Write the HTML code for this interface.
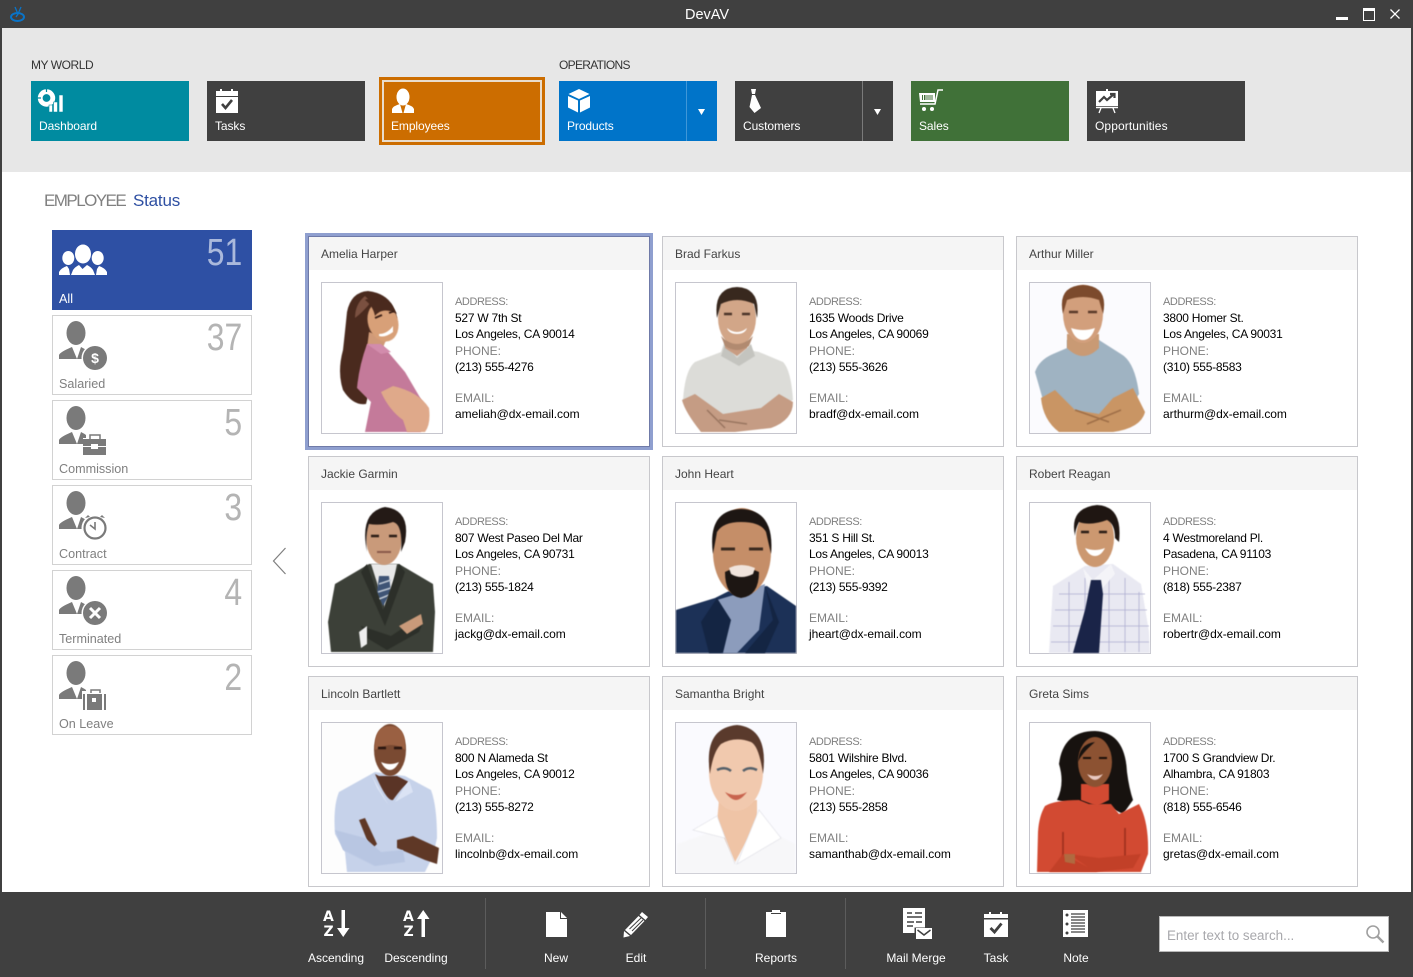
<!DOCTYPE html>
<html><head><meta charset="utf-8"><title>DevAV</title>
<style>
html,body{margin:0;padding:0;background:#fff}
#r{position:relative;width:1413px;height:977px;overflow:hidden;background:#fff;font-family:"Liberation Sans",sans-serif;font-size:12px}
#r div,#r svg,#r span.a{position:absolute;display:block}
.t{top:81px;width:158px;height:60px;color:#fff}
.t b{position:absolute;left:8px;top:37px;font-weight:400;font-size:12px;line-height:16px;white-space:nowrap;letter-spacing:-.08px}
.s{left:52px;width:198px;height:78px;border:1px solid #d2d2d2;background:#fff}
.s i{position:absolute;right:9px;top:0;font-style:normal;font-size:38px;line-height:44px;color:#b4b4b4;transform:scaleX(.84);transform-origin:100% 50%}
.s b{position:absolute;left:6px;top:60px;font-weight:400;font-size:12.6px;line-height:16px;color:#808080}
.c{width:340px;height:209px;border:1px solid #c8c8cc;background:#fff;color:#000}
.c h4{position:absolute;left:0;top:0;width:328px;height:33px;margin:0;padding-left:12px;background:#f5f5f5;font-weight:400;font-size:12px;line-height:35px;color:#444}
.c svg{left:12px;top:45px}
.c svg>*:not(:first-child){filter:blur(.6px)}
.c p{position:absolute;left:146px;margin:0;font-size:12px;line-height:16px;white-space:nowrap}
.c .l{color:#808080}
.c .ad{font-size:11px;letter-spacing:-.42px}
.c .v{letter-spacing:-.25px}
.c .p7{letter-spacing:-.05px}
.c .p1{top:57px}.c .p2{top:73px}.c .p3{top:89px}.c .p4{top:106px}.c .p5{top:122px}.c .p6{top:153px}.c .p7{top:169px}
.f{top:950px;width:100px;text-align:center;color:#fff;font-size:12px;line-height:16px}
</style></head><body><div id="r">

<!-- frame -->
<div style="left:0;top:0;width:1413px;height:28px;background:#404040"></div>
<div style="left:0;top:28px;width:2px;height:870px;background:#404040"></div>
<div style="left:1411px;top:28px;width:2px;height:870px;background:#404040"></div>
<div style="left:2px;top:28px;width:1409px;height:144px;background:#e7e7e7"></div>
<div style="left:0;top:892px;width:1413px;height:85px;background:#404040"></div>

<!-- title bar -->
<svg style="left:8px;top:4px" width="20" height="20" viewBox="0 0 20 20"><ellipse cx="9.500" cy="13" rx="6.500" ry="4" fill="none" stroke="#0a74c8" stroke-width="2"/><path d="M7 3L10 10L13 3M10 10L8 13" fill="none" stroke="#0a74c8" stroke-width="1.300"/></svg>
<div style="left:607px;top:6px;width:200px;text-align:center;color:#fff;font-size:14.500px;line-height:18px">DevAV</div>
<div style="left:1336px;top:17px;width:12px;height:3px;background:#fff"></div>
<div style="left:1363px;top:8px;width:10px;height:9px;border:1px solid #fff;border-top-width:3px"></div>
<svg style="left:1389px;top:8px" width="12" height="12" viewBox="0 0 12 12"><path d="M1.500 1.500L10.500 10.500M10.500 1.500L1.500 10.500" stroke="#fff" stroke-width="1.300"/></svg>

<!-- nav -->
<div style="left:31px;top:57px;color:#333;line-height:16px;letter-spacing:-.45px">MY WORLD</div>
<div style="left:559px;top:57px;color:#333;line-height:16px;letter-spacing:-.7px">OPERATIONS</div>

<div class="t" style="left:31px;background:#008ba0"><b>Dashboard</b>
<svg style="left:6px;top:7px" width="28" height="26" viewBox="0 0 28 26"><circle cx="9.500" cy="10" r="6.300" fill="none" stroke="#fff" stroke-width="4.800"/><path d="M9.500 0V4M0 10H4" stroke="#008ba0" stroke-width="1.200"/><path d="M12 17h3.500v7H12zM16.500 14H20.500V24H16.500zM22 7h4v17h-4z" fill="#fff" stroke="#008ba0" stroke-width=".6"/></svg></div>

<div class="t" style="left:207px;background:#404040"><b>Tasks</b>
<svg style="left:8px;top:7px" width="24" height="26" viewBox="0 0 24 26"><path d="M1 3H5V1H7V3H16V1H18V3H23V8H1ZM1 9H23V25H1Z" fill="#fff"/><path d="M7 16L10.500 20L17 12" fill="none" stroke="#404040" stroke-width="2.600"/></svg></div>

<div style="left:379px;top:77px;width:160px;height:62px;border:3px solid #cc6d00;outline:2px solid #e9dccb;outline-offset:-5px;background:#cc6d00"></div>
<div class="t" style="left:383px;background:transparent"><b>Employees</b>
<svg style="left:8px;top:7px" width="24" height="26" viewBox="0 0 24 26"><ellipse cx="12" cy="9" rx="6.500" ry="8.500" fill="#fff"/><path d="M1 25V21Q2 18 9 16L11.500 25ZM12.500 25L15 16Q22 18 23 21V25Z" fill="#fff"/></svg></div>

<div class="t" style="left:559px;background:#0074c9"><b>Products</b>
<div style="left:127px;top:0;width:1px;height:60px;background:#3f97d8"></div>
<svg style="left:139px;top:28px" width="8" height="6" viewBox="0 0 8 6"><path d="M0 0H7L3.500 6Z" fill="#fff"/></svg>
<svg style="left:8px;top:8px" width="24" height="24" viewBox="0 0 24 24"><path d="M12 0L22.500 5L12 10L1.500 5Z M1 7L11 11.500V23.500L1 18.500Z M13 11.500L23 7V18.500L13 23.500Z" fill="#fff"/></svg></div>

<div class="t" style="left:735px;background:#404040"><b>Customers</b>
<div style="left:127px;top:0;width:1px;height:60px;background:#7a7a7a"></div>
<svg style="left:139px;top:28px" width="8" height="6" viewBox="0 0 8 6"><path d="M0 0H7L3.500 6Z" fill="#fff"/></svg>
<svg style="left:12px;top:7px" width="16" height="26" viewBox="0 0 16 26"><path d="M4 1H9L8 6H5Z M5 7H8L14 20L7.500 25L2.500 19Z" fill="#fff"/></svg></div>

<div class="t" style="left:911px;background:#407138"><b>Sales</b>
<svg style="left:7px;top:7px" width="26" height="26" viewBox="0 0 26 26"><path d="M1 5H17V14H2Z" fill="#fff"/><path d="M4.500 7V12M6.500 7V12M8 7V12M10 7V12M12 7V12M14 7V12" stroke="#407138"/><path d="M2 16H17L20 2H25" fill="none" stroke="#fff" stroke-width="1.500"/><circle cx="6" cy="21" r="2" fill="#fff"/><circle cx="14" cy="21" r="2" fill="#fff"/></svg></div>

<div class="t" style="left:1087px;background:#404040"><b style="letter-spacing:.1px">Opportunities</b>
<svg style="left:8px;top:7px" width="24" height="26" viewBox="0 0 24 26"><path d="M11 1H13V3H11Z" fill="#fff"/><path d="M1 3H23V18H1Z" fill="#fff"/><path d="M4 14L9 9L12 12L19 6M15 6H19.500V10" fill="none" stroke="#404040" stroke-width="2.200"/><path d="M1 19.500H23" stroke="#fff" stroke-width="1.500"/><path d="M6 20L4 25M18 20L20 25" stroke="#fff" stroke-width="1.300"/></svg></div>

<!-- heading -->
<div style="left:44px;top:191px;font-size:17px;line-height:20px;color:#808080;letter-spacing:-1.55px;white-space:nowrap">EMPLOYEE</div>
<div style="left:133px;top:191px;font-size:17px;line-height:20px;color:#2e4fa2;letter-spacing:-.2px">Status</div>

<!-- filters -->
<div class="s" style="top:230px;height:80px;width:200px;border:0;background:#2e50a4"><i style="color:#aab9dc;top:1px;right:10px">51</i><b style="color:#fff;left:7px;top:61px">All</b>
<svg style="left:7px;top:14px" width="50" height="34" viewBox="0 0 50 34"><g fill="#fff"><ellipse cx="9.300" cy="14" rx="6" ry="7"/><ellipse cx="24" cy="10" rx="8" ry="9.500"/><ellipse cx="38.700" cy="14" rx="6" ry="7"/><path d="M0 31V28Q2 24 8 22L10 25L11 31ZM12 31L14 26Q16 23 20 21L23.500 25L28 21Q32 23 34 26L36 31ZM37 31L38 25L40 22Q46 24 48 28V31Z"/></g></svg></div>

<div class="s" style="top:315px"><i>37</i><b>Salaried</b>
<svg style="left:5px;top:5px" width="52" height="52" viewBox="0 0 52 52"><g fill="#7a7a7a"><ellipse cx="18" cy="12" rx="9.500" ry="12"/><path d="M1 38V34Q2 31 14 26L19 38ZM19 38L23 26Q27 28 28 29V38Z"/></g><g transform="translate(0,-1)"><circle cx="37" cy="38" r="13.500" fill="#fff"/><circle cx="37" cy="38" r="12" fill="#7a7a7a"/><text x="37" y="43" text-anchor="middle" font-family="Liberation Sans" font-weight="700" font-size="14" fill="#fff">$</text></g></svg></div>

<div class="s" style="top:400px"><i>5</i><b>Commission</b>
<svg style="left:5px;top:5px" width="52" height="52" viewBox="0 0 52 52"><g fill="#7a7a7a"><ellipse cx="18" cy="12" rx="9.500" ry="12"/><path d="M1 38V34Q2 31 14 26L19 38ZM19 38L23 26Q27 28 28 29V38Z"/></g><g transform="translate(0,-1)"><path d="M25 33H48V49H25Z" fill="#fff"/><path d="M32 34V30H42V34" fill="none" stroke="#7a7a7a" stroke-width="1.500"/><path d="M25 34H48V41H40V39H33V41H25ZM25 42H33V44H40V42H48V50H25Z" fill="#7a7a7a"/></g></svg></div>

<div class="s" style="top:485px"><i>3</i><b>Contract</b>
<svg style="left:5px;top:5px" width="52" height="52" viewBox="0 0 52 52"><g fill="#7a7a7a"><ellipse cx="18" cy="12" rx="9.500" ry="12"/><path d="M1 38V34Q2 31 14 26L19 38ZM19 38L23 26Q27 28 28 29V38Z"/></g><g transform="translate(0,-1)"><circle cx="37" cy="38" r="13.500" fill="#fff"/><circle cx="37" cy="38" r="10.500" fill="#fff" stroke="#7a7a7a" stroke-width="2.200"/><path d="M37 32V39L32 35" fill="none" stroke="#7a7a7a" stroke-width="1.600"/><path d="M27 28L30 25L32 27ZM47 28L44 25L42 27Z" fill="#7a7a7a"/></g></svg></div>

<div class="s" style="top:570px"><i>4</i><b>Terminated</b>
<svg style="left:5px;top:5px" width="52" height="52" viewBox="0 0 52 52"><g fill="#7a7a7a"><ellipse cx="18" cy="12" rx="9.500" ry="12"/><path d="M1 38V34Q2 31 14 26L19 38ZM19 38L23 26Q27 28 28 29V38Z"/></g><g transform="translate(0,-1)"><circle cx="37" cy="38" r="13.500" fill="#fff"/><circle cx="37" cy="38" r="12" fill="#7a7a7a"/><path d="M32 33L42 43M42 33L32 43" stroke="#fff" stroke-width="3"/></g></svg></div>

<div class="s" style="top:655px"><i>2</i><b>On Leave</b>
<svg style="left:5px;top:5px" width="52" height="52" viewBox="0 0 52 52"><g fill="#7a7a7a"><ellipse cx="18" cy="12" rx="9.500" ry="12"/><path d="M1 38V34Q2 31 14 26L19 38ZM19 38L23 26Q27 28 28 29V38Z"/></g><g transform="translate(0,-1)"><path d="M24 31H49V52H24Z" fill="#fff"/><path d="M33 33V30H42V33" fill="none" stroke="#7a7a7a" stroke-width="1.500"/><path d="M25 34H27V50H25ZM29 34H44V50H29ZM46 34H48V50H46Z" fill="#7a7a7a"/><rect x="34" y="38" width="4" height="4" fill="#fff"/></g></svg></div>

<svg style="left:272px;top:547px" width="15" height="28" viewBox="0 0 15 28"><path d="M13.500 1L1.500 14L13.500 27" fill="none" stroke="#7f7f7f" stroke-width="1.200"/></svg>

<!-- selected outline -->
<div style="left:305px;top:233px;width:342px;height:211px;border:3px solid #8f9fcf"></div>

<!-- CARDS -->
<div class="c" style="left:308px;top:236px;border-color:#6f7aa8"><h4>Amelia Harper</h4>
<svg width="122" height="152" viewBox="0 0 122 152"><rect x=".5" y=".5" width="121" height="151" fill="#fff" stroke="#c6c6ce"/>
<path d="M47 9Q30 10 26 30Q24 50 22 68Q16 90 22 108Q32 124 45 122L60 60L76 36Q72 12 47 9Z" fill="#4a2a1e"/>
<path d="M44 14Q34 22 34 36Q42 30 50 20Z" fill="#7a5040"/>
<path d="M48 50L66 56L60 70L46 66Z" fill="#d09a78"/>
<ellipse cx="62" cy="40" rx="15" ry="20" transform="rotate(-18 62 40)" fill="#d8a078"/>
<path d="M44 18Q50 14 70 22L76 32Q62 24 54 34Q52 24 44 18Z" fill="#4a2a1e"/>
<path d="M54 36L61 33M68 31L73 29" stroke="#3a2018" stroke-width="2"/>
<path d="M58 52Q66 52 72 44L72 50Q64 56 58 54Z" fill="#fff"/>
<path d="M46 62L62 64L84 90L104 124L100 150H44L50 120L36 106Q38 84 46 62Z" fill="#c47a9a"/>
<path d="M46 62L60 72L70 70L60 62Z" fill="#d28cac"/>
<path d="M60 110L72 104Q98 110 108 126Q110 142 104 150H86L82 138Q68 128 60 110Z" fill="#dfa98a"/></svg>
<p class="l ad p1">ADDRESS:</p><p class="v p2">527 W 7th St</p><p class="v p3">Los Angeles, CA 90014</p><p class="l p4">PHONE:</p><p class="v p5">(213) 555-4276</p><p class="l p6">EMAIL:</p><p class="p7">ameliah@dx-email.com</p></div>

<div class="c" style="left:662px;top:236px"><h4>Brad Farkus</h4>
<svg width="122" height="152" viewBox="0 0 122 152"><rect x=".5" y=".5" width="121" height="151" fill="#fff" stroke="#c6c6ce"/>
<path d="M52 52H72V68L84 70L108 80Q116 88 118 118Q100 128 76 136H40Q20 126 8 118Q10 88 20 80L46 70Z" fill="#dcdcd8"/>
<path d="M50 62L62 76L76 62L80 74L64 84L46 74Z" fill="#c4c4bf"/>
<path d="M52 54H72V66L62 74L50 66Z" fill="#c89c82"/>
<ellipse cx="62" cy="36" rx="19" ry="28" fill="#d2a688"/>
<path d="M42 36Q38 6 62 5Q86 6 82 36L79 22Q62 14 46 22Z" fill="#38281e"/>
<path d="M49 32H57M67 32H75" stroke="#4a3428" stroke-width="2.400"/>
<path d="M52 46Q62 54 72 46Q70 52 62 52Q54 52 52 46Z" fill="#fff"/>
<path d="M46 54Q62 70 78 54L74 64Q62 72 50 64Z" fill="#b18a70"/>
<path d="M7 118L20 112L48 132L86 126L104 112L118 120Q118 138 96 146L60 150H26Q10 130 7 118Z" fill="#c59c84"/>
<path d="M44 138L72 142M32 128L50 146" stroke="#9a7660" stroke-width="1.500"/></svg>
<p class="l ad p1">ADDRESS:</p><p class="v p2">1635 Woods Drive</p><p class="v p3">Los Angeles, CA 90069</p><p class="l p4">PHONE:</p><p class="v p5">(213) 555-3626</p><p class="l p6">EMAIL:</p><p class="p7">bradf@dx-email.com</p></div>

<div class="c" style="left:1016px;top:236px"><h4>Arthur Miller</h4>
<svg width="122" height="152" viewBox="0 0 122 152"><rect x=".5" y=".5" width="121" height="151" fill="#fbfbfe" stroke="#c6c6ce"/>
<path d="M38 58L70 58L92 72Q106 80 110 112L102 124L84 140H28L14 118L6 90Q10 78 24 72L38 66Z" fill="#9fb3c2"/>
<path d="M38 52H70V66Q54 82 38 66Z" fill="#c99a74"/>
<ellipse cx="54" cy="32" rx="20" ry="29" fill="#d29f7c"/>
<path d="M34 32Q28 4 54 3Q80 4 74 32L70 18Q54 12 38 18Z" fill="#7c4a2c"/>
<path d="M40 30H49M59 30H68" stroke="#5a3a2a" stroke-width="2.400"/>
<path d="M42 46Q54 50 66 46Q62 58 54 58Q46 58 42 46Z" fill="#fff"/>
<path d="M12 116L26 108L46 128L70 132L84 116L104 106L116 130Q112 146 84 150H30Q14 138 12 116Z" fill="#c99564"/>
<path d="M46 128L80 140M58 142L92 128" stroke="#9f6f48" stroke-width="1.500"/></svg>
<p class="l ad p1">ADDRESS:</p><p class="v p2">3800 Homer St.</p><p class="v p3">Los Angeles, CA 90031</p><p class="l p4">PHONE:</p><p class="v p5">(310) 555-8583</p><p class="l p6">EMAIL:</p><p class="p7">arthurm@dx-email.com</p></div>

<div class="c" style="left:308px;top:456px"><h4>Jackie Garmin</h4>
<svg width="122" height="152" viewBox="0 0 122 152"><rect x=".5" y=".5" width="121" height="151" fill="#fff" stroke="#c6c6ce"/>
<path d="M48 62L78 62L112 82L114 110L112 150H10L7 120L14 82Z" fill="#3c4038"/>
<path d="M50 62H76L66 112Z" fill="#e8e8e8"/>
<path d="M58 74H68L70 90L62 104L56 90Z" fill="#3f5475"/>
<path d="M58 82L70 78M57 90L70 86M58 97L68 93" stroke="#c4ccd6" stroke-width="1.500"/>
<path d="M46 62L62 108L78 62L84 70L64 124L40 70Z" fill="#2c2f29"/>
<ellipse cx="63" cy="36" rx="18" ry="27" fill="#c99a7a"/>
<path d="M46 50Q38 10 64 5Q90 8 84 40L80 50Q82 22 72 20Q60 24 48 22Q44 34 46 50Z" fill="#241a16"/>
<path d="M50 34H58M68 34H76" stroke="#2a1c16" stroke-width="2.400"/>
<path d="M56 50H70" stroke="#8a5a4a" stroke-width="2"/>
<path d="M40 124L70 134L94 118L102 120L98 130L66 148L46 136Z" fill="#2c2f29"/>
<path d="M78 124L100 112L102 122L86 132Z" fill="#c99a7a"/>
<path d="M38 130L46 124L46 142L40 146Z" fill="#eee"/></svg>
<p class="l ad p1">ADDRESS:</p><p class="v p2">807 West Paseo Del Mar</p><p class="v p3">Los Angeles, CA 90731</p><p class="l p4">PHONE:</p><p class="v p5">(213) 555-1824</p><p class="l p6">EMAIL:</p><p class="p7">jackg@dx-email.com</p></div>

<div class="c" style="left:662px;top:456px"><h4>John Heart</h4>
<svg width="122" height="152" viewBox="0 0 122 152"><rect x=".5" y=".5" width="121" height="151" fill="#fff" stroke="#c6c6ce"/>
<path d="M1 151V108L40 96L56 88L92 84L121 104V151Z" fill="#1c3157"/>
<path d="M42 98L62 92L90 82L84 128L62 151H46Z" fill="#8c9cbc"/>
<path d="M42 96L56 118L48 151H34L26 120Z" fill="#142543"/>
<path d="M90 84L98 118L70 151H90L104 120Z" fill="#142543"/>
<ellipse cx="67" cy="50" rx="29" ry="44" fill="#c58e68"/>
<path d="M38 52Q32 8 66 7Q100 8 96 52L91 30Q86 20 66 20Q48 20 42 30Z" fill="#1d1613"/>
<path d="M50 70Q66 62 84 70Q84 94 66 96Q50 94 50 70Z" fill="#1d1613"/>
<path d="M54 66Q66 60 80 66L78 72Q66 78 56 72Z" fill="#f0e4dc"/>
<path d="M46 47H60M74 47H88" stroke="#3a2a20" stroke-width="3"/></svg>
<p class="l ad p1">ADDRESS:</p><p class="v p2">351 S Hill St.</p><p class="v p3">Los Angeles, CA 90013</p><p class="l p4">PHONE:</p><p class="v p5">(213) 555-9392</p><p class="l p6">EMAIL:</p><p class="p7">jheart@dx-email.com</p></div>

<div class="c" style="left:1016px;top:456px"><h4>Robert Reagan</h4>
<svg width="122" height="152" viewBox="0 0 122 152"><rect x=".5" y=".5" width="121" height="151" fill="#fff" stroke="#c6c6ce"/>
<path d="M56 64L84 62L112 82L120 130L121 151H20L24 84Z" fill="#e9e9f2"/>
<path d="M30 92H116M26 108H118M24 124H120M22 140H120M40 80V150M56 76V150M80 76V150M96 76V150M110 90V150" stroke="#aeaed0" stroke-width=".8"/>
<path d="M54 66L64 78L82 62L86 72L70 90L60 88Z" fill="#f4f4f8"/>
<path d="M62 78H72L74 92L70 151H44L56 108Z" fill="#1a2448"/>
<ellipse cx="66" cy="36" rx="19" ry="29" fill="#cc9870"/>
<path d="M46 34Q40 6 68 3Q94 4 90 40L86 36Q86 22 78 18Q62 24 50 20Q46 28 46 34Z" fill="#1f1612"/>
<path d="M52 30H60M70 30H78" stroke="#2a1c16" stroke-width="2.400"/>
<path d="M56 46Q66 50 76 46Q72 54 66 54Q60 54 56 46Z" fill="#fff"/></svg>
<p class="l ad p1">ADDRESS:</p><p class="v p2">4 Westmoreland Pl.</p><p class="v p3">Pasadena, CA 91103</p><p class="l p4">PHONE:</p><p class="v p5">(818) 555-2387</p><p class="l p6">EMAIL:</p><p class="p7">robertr@dx-email.com</p></div>

<div class="c" style="left:308px;top:676px"><h4>Lincoln Bartlett</h4>
<svg width="122" height="152" viewBox="0 0 122 152"><rect x=".5" y=".5" width="121" height="151" fill="#fdfdfd" stroke="#c6c6ce"/>
<path d="M54 50L84 54L110 68Q116 84 116 116L112 134L104 150H26L24 130L14 112Q12 84 18 70Z" fill="#c6d2ea"/>
<path d="M54 52Q66 80 72 78Q82 64 88 60L76 54H58Z" fill="#5a3426"/>
<path d="M50 52L68 84L56 66Z M88 58L92 70L74 80Z" fill="#dbe3f4"/>
<path d="M38 98L50 128L56 122L44 96Z" fill="#5f3826"/>
<ellipse cx="69" cy="28" rx="16" ry="26" fill="#7a4a32"/>
<path d="M54 28Q52 4 69 4Q86 4 84 28Q72 18 54 28Z" fill="#9a6042"/>
<path d="M57 26H65M73 26H81" stroke="#2a1610" stroke-width="2.400"/>
<path d="M60 40Q69 44 78 40Q74 48 69 48Q64 48 60 40Z" fill="#fff"/>
<path d="M76 118L92 114L118 126L116 142L104 138L76 126Z" fill="#5f3826"/>
<path d="M14 108L44 116L60 130L82 128L84 140L54 144L22 128Z" fill="#b8c6e2"/></svg>
<p class="l ad p1">ADDRESS:</p><p class="v p2">800 N Alameda St</p><p class="v p3">Los Angeles, CA 90012</p><p class="l p4">PHONE:</p><p class="v p5">(213) 555-8272</p><p class="l p6">EMAIL:</p><p class="p7">lincolnb@dx-email.com</p></div>

<div class="c" style="left:662px;top:676px"><h4>Samantha Bright</h4>
<svg width="122" height="152" viewBox="0 0 122 152"><rect x=".5" y=".5" width="121" height="151" fill="#fafafe" stroke="#c6c6ce"/>
<path d="M2 151V122L42 108L58 100H70L88 106L120 122V151Z" fill="#f7f7f9"/>
<path d="M44 78H82V100L60 140L42 100Z" fill="#efc4a6"/>
<path d="M42 94L60 142L50 116L18 108ZM84 88L62 142L106 116Z" fill="#fff" stroke="#e2e2e8" stroke-width=".7"/>
<ellipse cx="61" cy="50" rx="27" ry="39" fill="#f1c9ae"/>
<path d="M35 52Q28 6 62 3Q94 6 88 52Q84 24 76 20Q60 14 46 22Q38 30 35 52Z" fill="#5a3a2c"/>
<path d="M42 48Q50 44 56 49M68 49Q74 44 82 48" fill="none" stroke="#55606a" stroke-width="2.500"/>
<path d="M50 70Q61 76 72 70Q66 78 61 78Q56 78 50 70Z" fill="#c8644e"/></svg>
<p class="l ad p1">ADDRESS:</p><p class="v p2">5801 Wilshire Blvd.</p><p class="v p3">Los Angeles, CA 90036</p><p class="l p4">PHONE:</p><p class="v p5">(213) 555-2858</p><p class="l p6">EMAIL:</p><p class="p7">samanthab@dx-email.com</p></div>

<div class="c" style="left:1016px;top:676px"><h4>Greta Sims</h4>
<svg width="122" height="152" viewBox="0 0 122 152"><rect x=".5" y=".5" width="121" height="151" fill="#fff" stroke="#c6c6ce"/>
<path d="M30 42Q34 9 66 9Q96 10 98 50Q100 66 104 78L94 92L78 84L50 84L28 78Q36 62 30 42Z" fill="#17120f"/>
<path d="M16 84Q26 78 50 78L60 82L82 82L90 92L110 82Q120 100 119 132L112 150H8L9 110Q10 94 16 84Z" fill="#d24a32"/>
<path d="M52 62L80 62L80 78L68 84L52 78Z" fill="#d24a32"/>
<ellipse cx="66" cy="40" rx="17" ry="25" fill="#8c5232"/>
<path d="M49 40Q50 22 66 20Q52 32 49 40Z" fill="#17120f"/>
<path d="M54 36H62M70 36H78" stroke="#1a0f0a" stroke-width="2"/>
<path d="M58 52Q66 56 74 52Q70 58 66 58Q62 58 58 52Z" fill="#e8c8c0"/>
<path d="M34 110V145M96 106V140" stroke="#9a2e1c" stroke-width="1.500"/>
<path d="M34 132L68 150H20ZM40 132L70 136L112 132L104 146L66 150Z" fill="#c24028"/>
<path d="M35 132H46V142L36 140Z" fill="#b06a40"/></svg>
<p class="l ad p1">ADDRESS:</p><p class="v p2">1700 S Grandview Dr.</p><p class="v p3">Alhambra, CA 91803</p><p class="l p4">PHONE:</p><p class="v p5">(818) 555-6546</p><p class="l p6">EMAIL:</p><p class="p7">gretas@dx-email.com</p></div>

<!-- footer redraw over cards bottom -->
<div style="left:0;top:892px;width:1413px;height:85px;background:#404040"></div>
<div style="left:485px;top:898px;width:1px;height:71px;background:#5c5c5c"></div>
<div style="left:705px;top:898px;width:1px;height:71px;background:#5c5c5c"></div>
<div style="left:845px;top:898px;width:1px;height:71px;background:#5c5c5c"></div>

<!-- footer icons -->
<svg style="left:320px;top:906px" width="32" height="34" viewBox="0 0 32 34" font-family="DejaVu Sans" font-weight="700" font-size="14" fill="#fff"><text x="3" y="15">A</text><text x="3.500" y="30">Z</text><path d="M21.500 4H25V22H29.500L23.200 31L17 22H21.500Z"/></svg>
<svg style="left:400px;top:906px" width="32" height="34" viewBox="0 0 32 34" font-family="DejaVu Sans" font-weight="700" font-size="14" fill="#fff"><text x="3" y="15">A</text><text x="3.500" y="30">Z</text><path d="M21.500 31H25V13H29.500L23.200 4L17 13H21.500Z"/></svg>
<svg style="left:545px;top:911px" width="23" height="27" viewBox="0 0 23 27"><path d="M1 1H15V8H22V26H1ZM16 1L22 7H16Z" fill="#fff"/></svg>
<svg style="left:623px;top:911px" width="26" height="27" viewBox="0 0 26 27"><path d="M19 1L25 6L22.500 9L16.500 4ZM15.500 5L21.500 10L8 24L2 19Z" fill="#fff"/><path d="M6.500 18L18 7M9 20L20 9" stroke="#404040" stroke-width="1"/><path d="M1 20L7 25L0.500 26.500Z" fill="#fff"/></svg>
<svg style="left:765px;top:909px" width="22" height="29" viewBox="0 0 22 29"><path d="M7 3V1H15V3H21V28H1V3Z" fill="#fff"/><path d="M6 4.500H16" stroke="#404040"/></svg>
<svg style="left:902px;top:907px" width="31" height="33" viewBox="0 0 31 33"><path d="M1 1H23V22H13V26H1Z" fill="#fff"/><path d="M5 6H10M13 6H20M5 10H20M5 15H12M14 15H20M5 19H11" stroke="#404040" stroke-width="1.500"/><rect x="12.500" y="20.500" width="18" height="12" fill="#404040"/><rect x="14" y="21" width="16" height="11" fill="#fff"/><path d="M15.500 23L22 28L28.500 23" fill="none" stroke="#404040" stroke-width="1.500"/></svg>
<svg style="left:983px;top:911px" width="26" height="27" viewBox="0 0 26 27"><path d="M1 3H6V1H8V3H17V1H19V3H25V7H1ZM1 8.500H25V26H1Z" fill="#fff"/><path d="M7.500 17L11.500 21L18.500 12.500" fill="none" stroke="#404040" stroke-width="2.800"/></svg>
<svg style="left:1063px;top:910px" width="25" height="28" viewBox="0 0 25 28"><rect width="25" height="27" fill="#fff"/><path d="M8 4H22M8 7H22M8 10H22M8 13H22M8 16H22M8 19H22M8 22H22" stroke="#404040" stroke-width="1.200"/><circle cx="4" cy="5" r="1.500" fill="#404040"/><circle cx="4" cy="14" r="1.500" fill="#404040"/><circle cx="4" cy="23" r="1.500" fill="#404040"/></svg>

<div class="f" style="left:286px">Ascending</div>
<div class="f" style="left:366px">Descending</div>
<div class="f" style="left:506px">New</div>
<div class="f" style="left:586px">Edit</div>
<div class="f" style="left:726px">Reports</div>
<div class="f" style="left:866px">Mail Merge</div>
<div class="f" style="left:946px">Task</div>
<div class="f" style="left:1026px">Note</div>

<!-- search -->
<div style="left:1159px;top:916px;width:228px;height:34px;background:#fff;border:1px solid #b8b8b8"></div>
<div style="left:1167px;top:928px;color:#a8a8ac;font-size:13.400px;line-height:16px">Enter text to search...</div>
<svg style="left:1365px;top:924px" width="20" height="20" viewBox="0 0 20 20"><circle cx="8" cy="8" r="6" fill="none" stroke="#a0a0a0" stroke-width="1.600"/><path d="M12.500 12.500L18.500 18.500" stroke="#a0a0a0" stroke-width="2.400"/></svg>

</div></body></html>
